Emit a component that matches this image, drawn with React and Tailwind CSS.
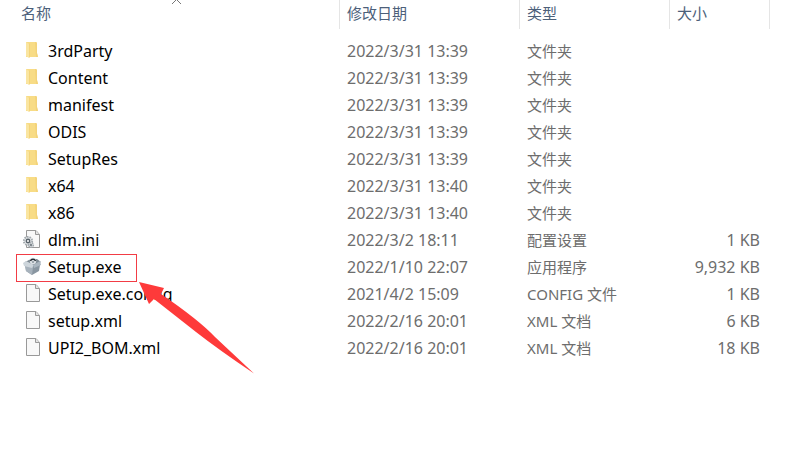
import React from 'react';

const files = [
    { name: '3rdParty', date: '2022/3/31 13:39', type: '文件夹', icon: 'folder' },
    { name: 'Content', date: '2022/3/31 13:39', type: '文件夹', icon: 'folder' },
    { name: 'manifest', date: '2022/3/31 13:39', type: '文件夹', icon: 'folder' },
    { name: 'ODIS', date: '2022/3/31 13:39', type: '文件夹', icon: 'folder' },
    { name: 'SetupRes', date: '2022/3/31 13:39', type: '文件夹', icon: 'folder' },
    { name: 'x64', date: '2022/3/31 13:40', type: '文件夹', icon: 'folder' },
    { name: 'x86', date: '2022/3/31 13:40', type: '文件夹', icon: 'folder' },
    { name: 'dlm.ini', date: '2022/3/2 18:11', type: '配置设置', size: '1 KB', icon: 'config' },
    { name: 'Setup.exe', date: '2022/1/10 22:07', type: '应用程序', size: '9,932 KB', icon: 'setup', marked: true },
    { name: 'Setup.exe.config', date: '2021/4/2 15:09', type: 'CONFIG 文件', size: '1 KB', icon: 'file' },
    { name: 'setup.xml', date: '2022/2/16 20:01', type: 'XML 文档', size: '6 KB', icon: 'file' },
    { name: 'UPI2_BOM.xml', date: '2022/2/16 20:01', type: 'XML 文档', size: '18 KB', icon: 'file' },
];

function FolderIcon() {
    return (
        <svg width="20" height="21" viewBox="0 0 20 21" aria-hidden="true">
            <path d="M4 1h10l1 1v10l1 4H4z" fill="#f8dc86" />
            <path d="M4 1l3 2v14l-3-2z" fill="#fae5a0" />
            <path d="M7 3l1-1v14l-1 1z" fill="#f4d47a" />
            <path d="M13 1h1l1 1v10l1 4h-2z" fill="#f3d37a" />
        </svg>
    );
}

function PageShape() {
    return (
        <>
            <path d="M4.500 .5h9.500l3.500 4v13h-13z" fill="#f8f8f8" stroke="#999" />
            <path d="M13.500 .5v4h4" fill="#e4e4e4" stroke="#999" />
        </>
    );
}

function FileIcon() {
    return (
        <svg width="20" height="21" viewBox="0 0 20 21" aria-hidden="true">
            <PageShape />
        </svg>
    );
}

function ConfigIcon() {
    return (
        <svg width="20" height="21" viewBox="0 0 20 21" aria-hidden="true">
            <PageShape />
            <circle cx="6" cy="11" r="4.200" fill="#dfe2e4" stroke="#a2a9ae" strokeWidth="1.800" strokeDasharray="1.600 1" />
            <circle cx="9" cy="15" r="2.400" fill="#d4d8db" stroke="#a2a9ae" strokeWidth="1.400" strokeDasharray="1.400 .8" />
            <circle cx="6" cy="11" r="1.700" fill="#fff" stroke="#59636b" strokeWidth="1.400" />
            <circle cx="9" cy="15" r=".9" fill="#59636b" />
        </svg>
    );
}

function SetupIcon() {
    return (
        <svg width="20" height="21" viewBox="0 0 20 21" aria-hidden="true">
            <path d="M3 8h15l-1 6-7 4-6-4z" fill="#8996a1" />
            <path d="M3 8l8 2-1 8-6-4z" fill="#a7b2bc" />
            <path d="M3 5l6-3h6l4 3-8 5z" fill="#7c8892" />
            <path d="M1 6l3-2 8 4-2 3-8-2z" fill="#cdd5db" />
            <path d="M11 8l7-4 1 4-7 3z" fill="#aab6c0" />
            <circle cx="11" cy="4" r="3.200" fill="#dce1e5" />
            <circle cx="11" cy="5" r="1" fill="#89939b" />
            <path d="M8.500 4a2.600 2.400 0 0 1 5 0" fill="none" stroke="#252d33" strokeWidth="1.400" />
        </svg>
    );
}

const icons = { folder: FolderIcon, file: FileIcon, config: ConfigIcon, setup: SetupIcon };

// red box around the name, plus the arrow that points at it
function Marker() {
    return (
        <>
            <span className="pointer-events-none absolute top-0 left-4 z-10 h-7 w-[121px] border border-[#f23c45]" />
            <svg className="pointer-events-none absolute top-7 left-[139px] z-10" width="116" height="94" viewBox="0 0 116 94" aria-hidden="true">
                <path d="M0 0L25 6L22 12Q60 38 76 55L115 91.500Q80 68 57 50L15 17L10 22z" fill="#fe3a3a" />
            </svg>
        </>
    );
}

function HeaderCell({ label, className }) {
    return (
        <th scope="col" className={`h-[38px] p-0 text-left align-top font-normal ${className}`}>
            <div className="h-[29px] border-r border-[#e5e5e5] pl-[7px] text-[15px] leading-[26px] text-[#4c607a]">{label}</div>
        </th>
    );
}

function FileRow({ file }) {
    const Icon = icons[file.icon];
    return (
        <tr className="h-[27px] whitespace-nowrap text-[#6d6d6d]">
            <td className="relative p-0 text-black">
                <div className="flex items-center gap-1.5 pl-[22px]">
                    <Icon />
                    <span>{file.name}</span>
                </div>
                {file.marked && <Marker />}
            </td>
            <td className="p-0 pl-[7px]">{file.date}</td>
            <td className="p-0 pl-[7px] text-[15px]">{file.type}</td>
            <td className="p-0 pr-2.5 text-right">{file.size}</td>
        </tr>
    );
}

function App() {
    return (
        <main className="relative min-h-screen bg-white pr-8 font-['Noto_Sans','Noto_Sans_CJK_SC',sans-serif]">
            <svg className="absolute top-0 left-[171px]" width="11" height="4" viewBox="0 0 11 4" aria-hidden="true">
                <path d="M1 4L5.500 -.5 10 4" fill="none" stroke="#777" />
            </svg>
            <table className="w-full table-fixed border-collapse text-base leading-[27px]">
                <thead>
                    <tr>
                        <HeaderCell label="名称" className="pl-3.5" />
                        <HeaderCell label="修改日期" className="w-[180px]" />
                        <HeaderCell label="类型" className="w-[150px]" />
                        <HeaderCell label="大小" className="w-[100px]" />
                    </tr>
                </thead>
                <tbody>
                    {files.map((file) => (
                        <FileRow key={file.name} file={file} />
                    ))}
                </tbody>
            </table>
        </main>
    );
}

export default App;
